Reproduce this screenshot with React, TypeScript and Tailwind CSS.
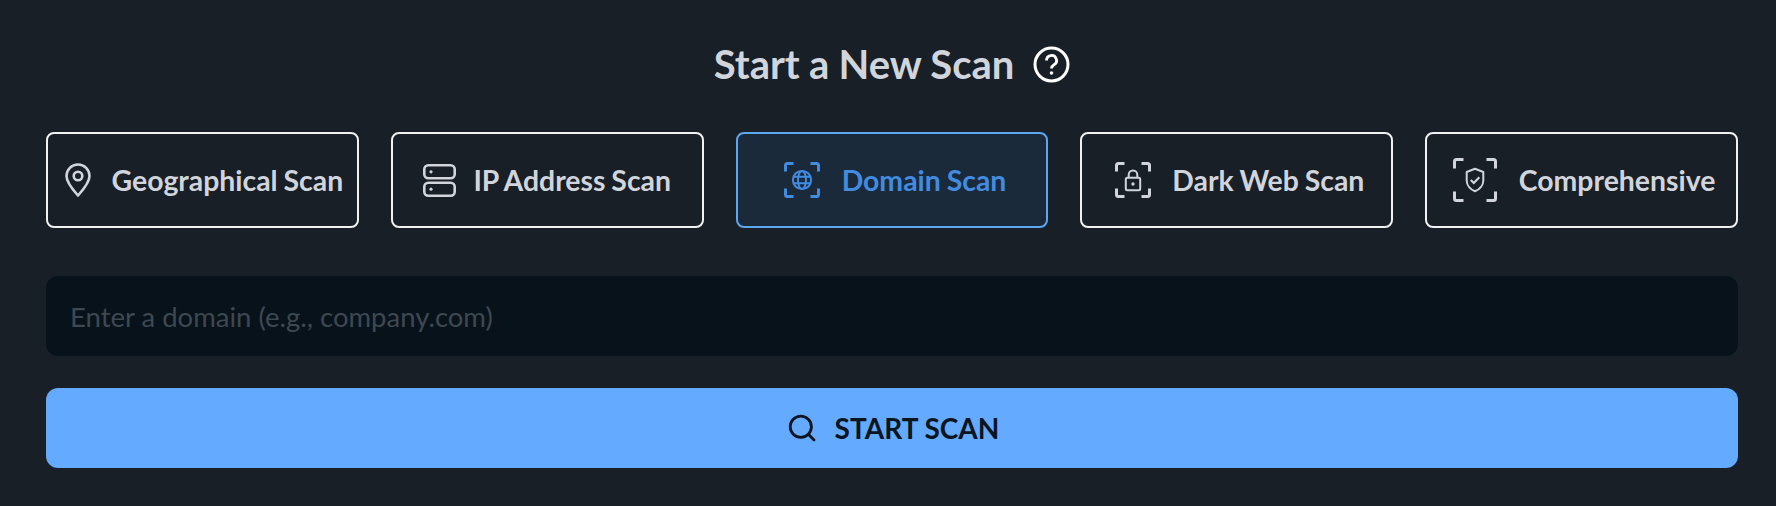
import React from 'react'

const brackets = (s: number, l: number, inset: number) => {
  const a = inset
  const b = s - inset
  const r = 2
  return `M${a} ${a + l}V${a + r}Q${a} ${a} ${a + r} ${a}H${a + l}M${b - l} ${a}H${b - r}Q${b} ${a} ${b} ${a + r}V${a + l}M${b} ${b - l}V${b - r}Q${b} ${b} ${b - r} ${b}H${b - l}M${a + l} ${b}H${a + r}Q${a} ${b} ${a} ${b - r}V${b - l}`
}

const PinIcon = () => (
  <svg width="26" height="34" viewBox="0 0 26 34" fill="none" stroke="currentColor" strokeWidth="2.6">
    <path d="M13 32.5C9 28 1.5 20 1.5 13a11.5 11.5 0 0 1 23 0C24.500 20 17 28 13 32.500Z" strokeLinejoin="round" />
    <circle cx="13" cy="13" r="4.300" />
  </svg>
)

const ServerIcon = () => (
  <svg width="33" height="33" viewBox="0 0 33 33" fill="none" stroke="currentColor" strokeWidth="2.6">
    <rect x="1.300" y="1.300" width="30.400" height="13" rx="4" />
    <rect x="1.300" y="18.700" width="30.400" height="13" rx="4" />
    <circle cx="8" cy="7.800" r="1.600" fill="currentColor" stroke="none" />
    <circle cx="8" cy="25.200" r="1.600" fill="currentColor" stroke="none" />
  </svg>
)

const GlobeIcon = () => (
  <svg width="36" height="36" viewBox="0 0 36 36" fill="none" stroke="currentColor">
    <path d={brackets(36, 8, 1.500)} strokeWidth="3" />
    <g strokeWidth="2">
      <circle cx="18" cy="18" r="9.100" />
      <ellipse cx="18" cy="18" rx="4" ry="9.100" />
      <path d="M9.500 14.800H26.500M9.500 21.200H26.500" />
    </g>
  </svg>
)

const LockIcon = () => (
  <svg width="36" height="36" viewBox="0 0 36 36" fill="none" stroke="currentColor">
    <path d={brackets(36, 8, 1.500)} strokeWidth="3" />
    <rect x="10.800" y="15.800" width="14.400" height="12.400" rx="1.500" strokeWidth="2" />
    <path d="M13.700 15.800V12.700a4.300 4.300 0 0 1 8.600 0V15.800" strokeWidth="2" />
    <circle cx="18" cy="22" r="1.700" fill="currentColor" stroke="none" />
  </svg>
)

const ShieldIcon = () => (
  <svg width="44" height="44" viewBox="0 0 44 44" fill="none" stroke="currentColor">
    <path d={brackets(44, 9, 1.500)} strokeWidth="3" />
    <path d="M22 10.800L30.300 14V22.500C30.300 27.500 26.500 31.500 22 33.200C17.500 31.500 13.700 27.500 13.700 22.500V14Z" strokeWidth="2" strokeLinejoin="round" />
    <path d="M17.800 22L20.800 25L26.300 19.200" strokeWidth="2.200" />
  </svg>
)

const HelpIcon = () => (
  <svg width="37" height="37" viewBox="0 0 37 37" fill="none" stroke="#ffffff" strokeWidth="3">
    <circle cx="18.500" cy="18.500" r="16.500" />
    <path d="M13.500 14.500a5 5 0 1 1 7.500 4.300c-1.600 1-2.500 1.800-2.500 3.700" strokeWidth="2.800" />
    <circle cx="18.500" cy="27" r="1.800" fill="#ffffff" stroke="none" />
  </svg>
)

const SearchIcon = () => (
  <svg width="28" height="28" viewBox="0 0 28 28" fill="none" stroke="currentColor" strokeWidth="2.800" strokeLinecap="round">
    <circle cx="12.800" cy="12.800" r="10.600" />
    <path d="M20.800 20.800L26 26" />
  </svg>
)

const scanTypes = [
  { label: 'Geographical Scan', icon: <PinIcon />, gap: 'gap-[21px] pl-[3px]', active: false },
  { label: 'IP Address Scan', icon: <ServerIcon />, gap: 'gap-[17px]', active: false },
  { label: 'Domain Scan', icon: <GlobeIcon />, gap: 'gap-[22px] pl-[6px]', active: true },
  { label: 'Dark Web Scan', icon: <LockIcon />, gap: 'gap-[21px] pl-[6px]', active: false },
  { label: 'Comprehensive', icon: <ShieldIcon />, gap: 'gap-[22px] pl-[5px]', active: false },
]

export default function App() {
  return (
    <div className="h-[506px] bg-[#181f27] pl-[46px] pr-[38px] pt-[36px] font-['Lato','Liberation_Sans',sans-serif]">
      <div className="flex h-[56px] items-center justify-center gap-[19px]">
        <h2 className="text-[40px] font-bold leading-[56px] text-[#d1d5db] [word-spacing:-0.5px]">Start a New Scan</h2>
        <div className="mt-[1px]">
          <HelpIcon />
        </div>
      </div>

      <div className="mt-[40px] grid grid-cols-5 gap-[32px]">
        {scanTypes.map((s) => (
          <button
            key={s.label}
            className={
              s.active
                ? `flex h-[96px] items-center justify-center whitespace-nowrap rounded-[8px] border-2 border-[#5ca6f2] bg-[#1b2a3b] text-[28.400px] font-bold text-[#428ce0] [word-spacing:-1px] ${s.gap}`
                : `flex h-[96px] items-center justify-center whitespace-nowrap rounded-[8px] border-2 border-[#f0f1f3] bg-[#181f27] text-[28.400px] font-bold text-[#d1d5db] [word-spacing:-1px] ${s.gap}`
            }
          >
            {s.icon}
            <span>{s.label}</span>
          </button>
        ))}
      </div>

      <input
        placeholder="Enter a domain (e.g., company.com)"
        className="mt-[48px] block h-[80px] w-full rounded-[12px] bg-[#08121a] px-[24px] text-[27.500px] text-[#d1d5db] outline-none placeholder:text-[#3e4851]"
      />

      <button className="mt-[32px] flex h-[80px] w-full items-center justify-center gap-[19px] rounded-[12px] bg-[#64aaff] pl-[3px] text-[28px] font-bold text-[#0b1520]">
        <SearchIcon />
        <span>START SCAN</span>
      </button>
    </div>
  )
}
